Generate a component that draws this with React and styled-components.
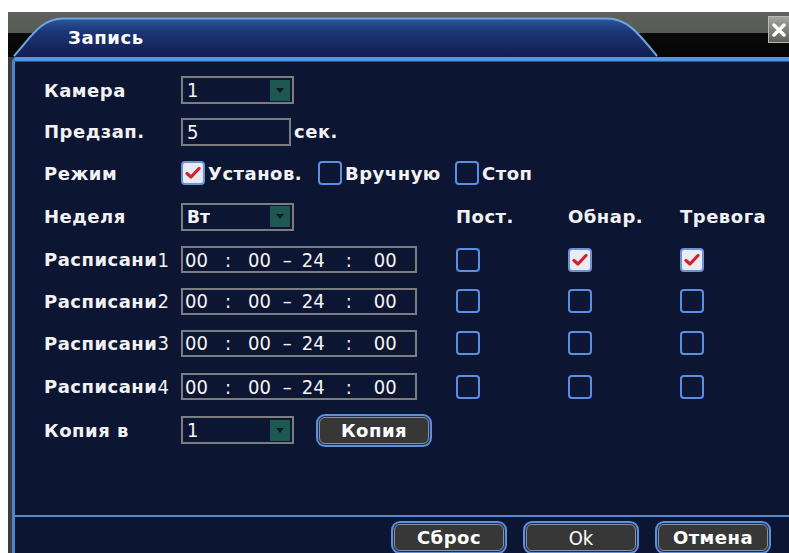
import React from 'react';
import styled, { createGlobalStyle } from 'styled-components';

/* Fonts ---------------------------*/
const BOLD = `"DejaVu Sans", "Liberation Sans", sans-serif`;
const NARROW = `"Liberation Sans Narrow", "DejaVu Sans Condensed", "Liberation Sans", sans-serif`;

const GlobalStyle = createGlobalStyle`
    body {
        margin: 0;
        background: #ffffff;
        font-family: ${BOLD};
    }
`;

/* Small parts ---------------------------*/
const CheckBox = ({ checked }) => (
    <CheckBoxStyled $checked={checked}>
        {checked && (
            <svg width="16" height="14" viewBox="0 0 16 14">
                <path d="M2 7.5 L6 11 L14 2.5" fill="none" stroke="#d3222b" strokeWidth="3.2" strokeLinecap="round" strokeLinejoin="round" />
            </svg>
        )}
    </CheckBoxStyled>
);

const Select = ({ value, bold }) => (
    <SelectStyled>
        <FieldText $bold={bold}>{value}</FieldText>
        <ArrowBox>
            <svg width="8" height="5" viewBox="0 0 8 5">
                <path d="M0 0 H8 L4 5 Z" fill="#0b1a1a" />
            </svg>
        </ArrowBox>
    </SelectStyled>
);

// gaps before each part of "00 : 00 - 24 : 00"
const timeParts = [
    ['00', 0], [':', 17], ['00', 17], ['–', 12], ['24', 10], [':', 21], ['00', 22],
];

const TimeRange = () => (
    <TimeBox>
        {timeParts.map(([part, gap], i) => (
            <TimePart key={i} $gap={gap}>{part}</TimePart>
        ))}
    </TimeBox>
);

const schedules = [
    { n: 1, flags: [false, true, true] },
    { n: 2, flags: [false, false, false] },
    { n: 3, flags: [false, false, false] },
    { n: 4, flags: [false, false, false] },
];

const App = () => {
    return (
        <>
            <GlobalStyle />
            <Window>
                <Header>
                    <Tab>
                        <svg className="shape" width="645" height="40" viewBox="0 0 645 40">
                            <defs>
                                <linearGradient id="tabFill" x1="0" y1="0" x2="0" y2="1">
                                    <stop offset="0" stopColor="#2c5a9c" />
                                    <stop offset="0.35" stopColor="#1b3677" />
                                    <stop offset="1" stopColor="#141d50" />
                                </linearGradient>
                            </defs>
                            <path d="M0 40 C18 20 28 1 50 1 L594 1 C616 1 628 20 645 40 Z" fill="url(#tabFill)" />
                            <path d="M1 39 C18 20 28 1.5 50 1.5 L594 1.5 C616 1.5 628 20 644 39" fill="none" stroke="#6fa6e2" strokeWidth="2" />
                        </svg>
                        <Title>Запись</Title>
                    </Tab>
                    <CloseButton>
                        <svg width="14" height="14" viewBox="0 0 14 14">
                            <path d="M2 2 L12 12 M12 2 L2 12" stroke="#ffffff" strokeWidth="3.4" strokeLinecap="round" />
                        </svg>
                    </CloseButton>
                </Header>

                <Body>
                    <Form>
                        <Label $lead>Камера</Label>
                        <Cell><Select value="1" /></Cell>

                        <Label $lead>Предзап.</Label>
                        <Cell>
                            <InputBox><FieldText>5</FieldText></InputBox>
                            <Unit>сек.</Unit>
                        </Cell>

                        <Label $lead>Режим</Label>
                        <ModeGroup>
                            <ModeItem><CheckBox checked /><span>Установ.</span></ModeItem>
                            <ModeItem><CheckBox /><span>Вручную</span></ModeItem>
                            <ModeItem><CheckBox /><span>Стоп</span></ModeItem>
                        </ModeGroup>

                        <Label $lead>Неделя</Label>
                        <Cell><Select value="Вт" bold /></Cell>
                        <Label>Пост.</Label>
                        <Label>Обнар.</Label>
                        <Label>Тревога</Label>

                        {schedules.map(row => (
                            <React.Fragment key={row.n}>
                                <Label $lead>Расписани<Digit>{row.n}</Digit></Label>
                                <Cell><TimeRange /></Cell>
                                {row.flags.map((f, i) => (
                                    <Cell key={i}><CheckBox checked={f} /></Cell>
                                ))}
                            </React.Fragment>
                        ))}

                        <Label $lead>Копия в</Label>
                        <Cell $wide>
                            <Select value="1" />
                            <PanelButton>Копия</PanelButton>
                        </Cell>
                    </Form>

                    <Footer>
                        <PanelButton>Сброс</PanelButton>
                        <PanelButton $narrow>Ok</PanelButton>
                        <PanelButton>Отмена</PanelButton>
                    </Footer>
                </Body>
            </Window>
        </>
    );
}

export default App;

/* Styles ---------------------------*/
const Window = styled.div`
    margin: 12px 0 0 8px;
    width: 781px;
    height: 541px;
    overflow: hidden;
    display: flex;
    flex-direction: column;
    background: #3b3d3b;
`;

const Header = styled.div`
    height: 45px;
    flex: none;
    display: flex;
    align-items: flex-start;
    background: linear-gradient(#5e605a 0, #595b56 21px, #090909 21px, #050505 100%);
`;

const Tab = styled.div`
    position: relative;
    width: 645px;
    height: 40px;
    margin: 5px 0 0 5px;
    display: flex;
    align-items: center;

    .shape {
        position: absolute;
        left: 0;
        top: 0;
    }
`;

const Title = styled.span`
    position: relative;
    padding-left: 55px;
    color: #ffffff;
    font-weight: bold;
    font-size: 18px;
    letter-spacing: 0.6px;
`;

const CloseButton = styled.div`
    margin: 4px -5px 0 auto;
    width: 26px;
    height: 27px;
    box-sizing: border-box;
    display: flex;
    align-items: center;
    justify-content: center;
    padding-right: 5px;
    border: 1px solid #b9bab5;
    background: linear-gradient(#a3a4a0, #5f605c);
`;

const Body = styled.div`
    flex: 1;
    margin-left: 4px;
    display: flex;
    flex-direction: column;
    background: #0c1532;
    border-top: 4px solid #5596e0;
    border-left: 3px solid #4d84cc;
    border-top-left-radius: 5px;
    box-shadow: inset 0 1px 0 #2a5494;
`;

const Form = styled.div`
    display: grid;
    grid-template-columns: 137px 275px 112px 112px 1fr;
    grid-template-rows: 42px 41px 42px 45px 41px 42px 42px 45px 42px;
    padding: 8px 0 0 29px;
    color: #f2f2f4;
`;

const Label = styled.div`
    ${p => p.$lead && 'grid-column: 1;'}
    display: flex;
    align-items: center;
    font-weight: bold;
    font-size: 18px;
    letter-spacing: 0.5px;
    color: #f2f2f4;
    white-space: nowrap;
`;

const Digit = styled.span`
    font-family: ${NARROW};
    font-stretch: condensed;
    font-weight: normal;
    font-size: 20px;
    letter-spacing: 0;
`;

const Cell = styled.div`
    display: flex;
    align-items: center;
    gap: 22px;
    ${p => p.$wide && 'grid-column: 2 / span 2;'}
`;

const Unit = styled.span`
    margin-left: -19px;
    font-weight: bold;
    font-size: 18px;
    letter-spacing: 0.5px;
`;

const ModeGroup = styled.div`
    grid-column: 2 / -1;
    display: flex;
    align-items: center;
`;

const ModeItem = styled.div`
    width: 137px;
    display: flex;
    align-items: center;
    gap: 3px;
    font-weight: bold;
    font-size: 18px;
    letter-spacing: 0.5px;
`;

const CheckBoxStyled = styled.div`
    width: 24px;
    height: 24px;
    box-sizing: border-box;
    flex: none;
    display: flex;
    align-items: center;
    justify-content: center;
    border: 2px solid ${p => (p.$checked ? '#6c93d6' : '#5a8fe4')};
    border-radius: 4px;
    background: ${p => (p.$checked ? '#e9ebf3' : '#0d1634')};
`;

const FieldBox = styled.div`
    box-sizing: border-box;
    display: flex;
    align-items: center;
    border: 2px solid #7c7d80;
    background: #0c1532;
    color: #f4f4f4;
`;

const SelectStyled = styled(FieldBox)`
    width: 113px;
    height: 28px;
    padding: 0 2px 0 4px;
    justify-content: space-between;
`;

const InputBox = styled(FieldBox)`
    width: 110px;
    height: 28px;
    padding-left: 4px;
`;

const FieldText = styled.span`
    font-family: ${p => (p.$bold ? BOLD : NARROW)};
    font-stretch: ${p => (p.$bold ? 'normal' : 'condensed')};
    font-weight: ${p => (p.$bold ? 'bold' : 'normal')};
    font-size: ${p => (p.$bold ? '17px' : '20px')};
`;

const ArrowBox = styled.div`
    width: 20px;
    height: 21px;
    display: flex;
    align-items: center;
    justify-content: center;
    background: #1d5952;
`;

const TimeBox = styled(FieldBox)`
    width: 236px;
    height: 27px;
    padding-left: 2px;
    font-family: ${NARROW};
    font-stretch: condensed;
    font-size: 20px;
`;

const TimePart = styled.span`
    margin-left: ${p => p.$gap}px;
`;

const PanelButton = styled.div`
    flex: none;
    width: 110px;
    height: 27px;
    margin: 3px;
    box-sizing: border-box;
    display: flex;
    align-items: center;
    justify-content: center;
    border: 1px solid #8d9096;
    border-radius: 6px;
    background: #373737;
    box-shadow: 0 0 0 1px #1b2c55, 0 0 0 3px #5b90dc;
    color: #ffffff;
    font-family: ${p => (p.$narrow ? NARROW : BOLD)};
    font-stretch: ${p => (p.$narrow ? 'condensed' : 'normal')};
    font-weight: ${p => (p.$narrow ? 'normal' : 'bold')};
    font-size: ${p => (p.$narrow ? '20px' : '18px')};
    letter-spacing: ${p => (p.$narrow ? '0' : '0.5px')};
`;

const Footer = styled.div`
    margin-top: auto;
    height: 38px;
    box-sizing: border-box;
    flex: none;
    display: flex;
    justify-content: flex-end;
    align-items: flex-start;
    gap: 16px;
    padding: 4px 18px 0 0;
    border-top: 2px solid #5a8ad2;
`;
